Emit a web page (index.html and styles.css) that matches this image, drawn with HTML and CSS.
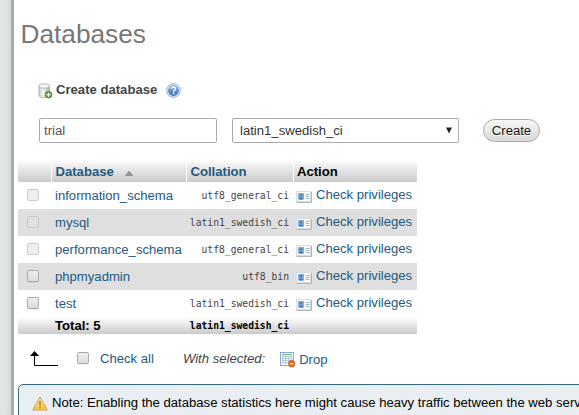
FILE: index.html
```html
<!DOCTYPE html>
<html lang="en">
<head>
<meta charset="utf-8">
<title>Databases</title>
<link rel="stylesheet" href="styles.css">
</head>
<body>
<svg class="defs" width="0" height="0">
  <defs>
    <linearGradient id="cyl"><stop offset="0" stop-color="#c4c4c4"/><stop offset=".35" stop-color="#f8f8f8"/><stop offset="1" stop-color="#b0b0b0"/></linearGradient>
    <linearGradient id="blue" x2="0" y2="1"><stop offset="0" stop-color="#8db3df"/><stop offset="1" stop-color="#3e75b8"/></linearGradient>
    <linearGradient id="amber" x2="0" y2="1"><stop offset="0" stop-color="#fff0a8"/><stop offset="1" stop-color="#f5c23c"/></linearGradient>
    <symbol id="card" viewBox="0 0 16 12">
      <path d="M.5 11.500h15V1" fill="none" stroke="#b5b5b5"/>
      <rect x=".5" y=".5" width="14" height="10" fill="#fbfbfb" stroke="#dadada"/>
      <rect x="2" y="2" width="6" height="6.500" fill="#6fb2f2"/>
      <circle cx="5" cy="4.400" r="1.400" fill="#9b6d4c"/>
      <path d="M3 8.500q0-1.900 2-1.900t2 1.900z" fill="#3c70ab"/>
      <path d="M9.500 3.500h4M9.500 5.500h4M9.500 7.500h4" stroke="#9fb9cf"/>
    </symbol>
  </defs>
</svg>
<div class="page">
  <aside class="nav"></aside>
  <main class="content">
    <h2>Databases</h2>
    <div class="create-title">
      <svg class="db-icon" width="15" height="16" viewBox="0 0 15 16">
        <path d="M1 3v9.500c0 3 10.500 3 10.500 0V3z" fill="url(#cyl)" stroke="#aaa" stroke-width=".8"/>
        <ellipse cx="6.250" cy="3" rx="5.250" ry="2.200" fill="#f3f3f3" stroke="#aaa" stroke-width=".8"/>
        <circle cx="10.600" cy="11.700" r="3.300" fill="#5d9b38" stroke="#3f7725" stroke-width=".7"/>
        <path d="M10.600 9.700v4M8.600 11.700h4" stroke="#fff" stroke-width="1.300"/>
      </svg>
      <span>Create database</span>
      <svg class="help-icon" width="15" height="15" viewBox="0 0 15 15">
        <circle cx="7.500" cy="7.500" r="6.900" fill="#dce8f5" stroke="#86a5cb" stroke-width=".8"/>
        <circle cx="7.500" cy="7.500" r="5.400" fill="url(#blue)"/>
        <path d="M5.500 6.100C5.500 3.400 9.600 3.500 9.500 5.900 9.500 7.200 7.600 7.200 7.600 8.700M7.600 9.800v1.500" fill="none" stroke="#fff" stroke-width="1.500"/>
      </svg>
    </div>
    <div class="create-form">
      <div class="field name">trial</div>
      <div class="field collation"><span>latin1_swedish_ci</span><svg width="6" height="7" viewBox="0 0 6 7"><path d="M0 .5h6L3 6.500z" fill="#222"/></svg></div>
      <button type="button">Create</button>
    </div>
    <div class="table">
      <div class="row head">
        <div></div>
        <div class="link">Database <svg width="8" height="5" viewBox="0 0 8 5"><path d="M4 .3L7.600 4.500H.4z" fill="#999" stroke="#777" stroke-width=".6"/></svg></div>
        <div class="link">Collation</div>
        <div>Action</div>
      </div>
      <div class="row"><div><i class="check off"></i></div><div class="link">information_schema</div><div class="mono">utf8_general_ci</div><div class="link action"><svg width="16" height="12"><use href="#card"/></svg>Check privileges</div></div>
      <div class="row even"><div><i class="check off"></i></div><div class="link">mysql</div><div class="mono">latin1_swedish_ci</div><div class="link action"><svg width="16" height="12"><use href="#card"/></svg>Check privileges</div></div>
      <div class="row"><div><i class="check off"></i></div><div class="link">performance_schema</div><div class="mono">utf8_general_ci</div><div class="link action"><svg width="16" height="12"><use href="#card"/></svg>Check privileges</div></div>
      <div class="row even"><div><i class="check"></i></div><div class="link">phpmyadmin</div><div class="mono">utf8_bin</div><div class="link action"><svg width="16" height="12"><use href="#card"/></svg>Check privileges</div></div>
      <div class="row"><div><i class="check"></i></div><div class="link">test</div><div class="mono">latin1_swedish_ci</div><div class="link action"><svg width="16" height="12"><use href="#card"/></svg>Check privileges</div></div>
      <div class="row total"><div></div><div>Total: 5</div><div class="mono">latin1_swedish_ci</div><div></div></div>
    </div>
    <div class="bulk">
      <svg class="arrow" width="28" height="15" viewBox="0 0 28 15"><path d="M4.500 3v11.500H28" fill="none" stroke="#000"/><path d="M4.500 0L9 5H0z"/></svg>
      <i class="check"></i>
      <span class="link check-all">Check all</span>
      <em>With selected:</em>
      <svg class="drop-icon" width="16" height="16" viewBox="0 0 16 16">
        <rect x=".5" y=".5" width="13" height="13" fill="#fafcff" stroke="#86a9d6"/>
        <path d="M2 2.500h10" stroke="#75bd70" stroke-width="1.300"/>
        <path d="M2 4.500h10M2 6.500h10M2 8.500h10M2 10.500h10M2.500 4v8M5.500 4v8M8.500 4v8M11.500 4v8" stroke="#a9bdd7" stroke-width=".8"/>
        <circle cx="11.700" cy="11.700" r="3.200" fill="#e9661d" stroke="#c54b0c" stroke-width=".7"/>
        <path d="M9.900 11.700h3.600" stroke="#fff" stroke-width="1.300"/>
      </svg>
      <span class="link">Drop</span>
    </div>
    <div class="notice">
      <svg width="16" height="15" viewBox="0 0 16 15"><path d="M8 1L15.300 14H.7z" fill="url(#amber)" stroke="#dca04a" stroke-linejoin="round"/><path d="M8 5v4.700M8 11v1.500" stroke="#b88228" stroke-width="1.700"/></svg>
      <span>Note: Enabling the database statistics here might cause heavy traffic between the web server and the MySQL server.</span>
    </div>
  </main>
</div>
</body>
</html>
```
FILE: styles.css
```css
* { box-sizing: border-box; }
body {
  margin: 0;
  height: 415px;
  overflow: hidden;
  background: #fff;
  color: #444;
  font: 13.12px/16px "Liberation Sans", Arial, sans-serif;
}
.defs { display: block; height: 0; }
.page { display: flex; height: 415px; }
.nav {
  flex: 0 0 14px;
  border-right: 3px solid #aaa;
  background: linear-gradient(90deg, #e3e6e7, #dfe3e4 60%, #d3d8da);
}
.content { flex: 1; min-width: 0; overflow: hidden; padding-left: 4px; }
svg { display: block; flex: none; }
h2 {
  margin: 19px 0 0 2.5px;
  height: 30px;
  color: #777;
  font-size: 26.24px;
  line-height: 30px;
  font-weight: normal;
  text-shadow: 0 1px 0 #fff;
}
.create-title { display: flex; margin: 33px 0 0 20px; height: 18px; font-weight: bold; }
.db-icon { margin: 1px 3px 0 0; }
.help-icon { margin: 1px 0 0 9px; }
.create-form { display: flex; align-items: flex-start; margin: 18px 0 0 21px; height: 44px; }
.field {
  display: flex;
  align-items: center;
  height: 25px;
  border: 1px solid #aaa;
  border-radius: 2px;
  background: #fff;
}
.name { width: 178px; padding-left: 4px; color: #555; }
.collation { justify-content: space-between; width: 227px; margin-left: 15px; padding: 0 6px 0 7px; color: #333; }
.collation svg { margin-bottom: 1px; }
button {
  width: 57px;
  height: 23px;
  margin: 1px 0 0 24px;
  padding: 0;
  border: 1px solid #aaa;
  border-radius: 12px;
  background: linear-gradient(#f8f8f8, #d8d8d8);
  color: #111;
  font: inherit;
  text-shadow: 0 1px 0 #fff;
}
.table { width: 399px; }
.row { display: grid; grid-template-columns: 34px 135px 107px 123px; height: 27px; line-height: 27px; }
.row > div { padding-left: 3px; white-space: nowrap; }
.row > div:first-child { padding: 7px 0 0 9px; }
.row > .mono { padding: 0 5px 0 0; text-align: right; }
.link { color: #235a81; }
.even { background: #dfdfdf; }
.mono { font-family: "DejaVu Sans Mono", monospace; font-size: 9.7px; }
.action { display: flex; line-height: 25px; }
.action svg { margin: 9px 4px 0 -1px; }
.head { height: 20px; line-height: 20px; color: #000; font-weight: bold; }
.head > div { border-right: 1px solid #fff; background: linear-gradient(#f7f7f7, #cacaca); }
.head > div:last-child { border-right: 0; }
.head > div.link { padding-left: 3.5px; }
.head > div:nth-child(2) { display: flex; }
.head > div:nth-child(2) svg { margin: 9px 0 0 11px; }
.total { height: 17px; line-height: 17px; color: #000; font-weight: bold; background: linear-gradient(#fff, #cacaca); }
.check {
  display: block;
  width: 12px;
  height: 12px;
  border: 1px solid #aaa;
  border-radius: 2px;
  background: linear-gradient(#eee, #dcdcdc);
  box-shadow: 0 1px 0 #0001;
}
.off { border-color: #ccc; background: #eee; box-shadow: none; }
.even .off { background: #e1e1e1; border-color: #c6c6c6; }
.bulk { display: flex; height: 50px; padding: 17px 0 0 12px; }
.bulk .check { margin: 1px 0 0 19px; }
.check-all { margin-left: 11px; }
.bulk em { margin-left: 29px; }
.drop-icon { margin: 1px 0 0 15px; }
.drop-icon + span { margin: 1px 0 0 3px; }
.notice {
  display: flex;
  width: 600px;
  height: 50px;
  padding: 10px 0 0 13px;
  border: 1px solid #3a6c7e;
  border-radius: 5px;
  background: #e8eef1;
  color: #000;
  white-space: nowrap;
}
.notice svg { margin: 1px 4px 0 0; }
```
